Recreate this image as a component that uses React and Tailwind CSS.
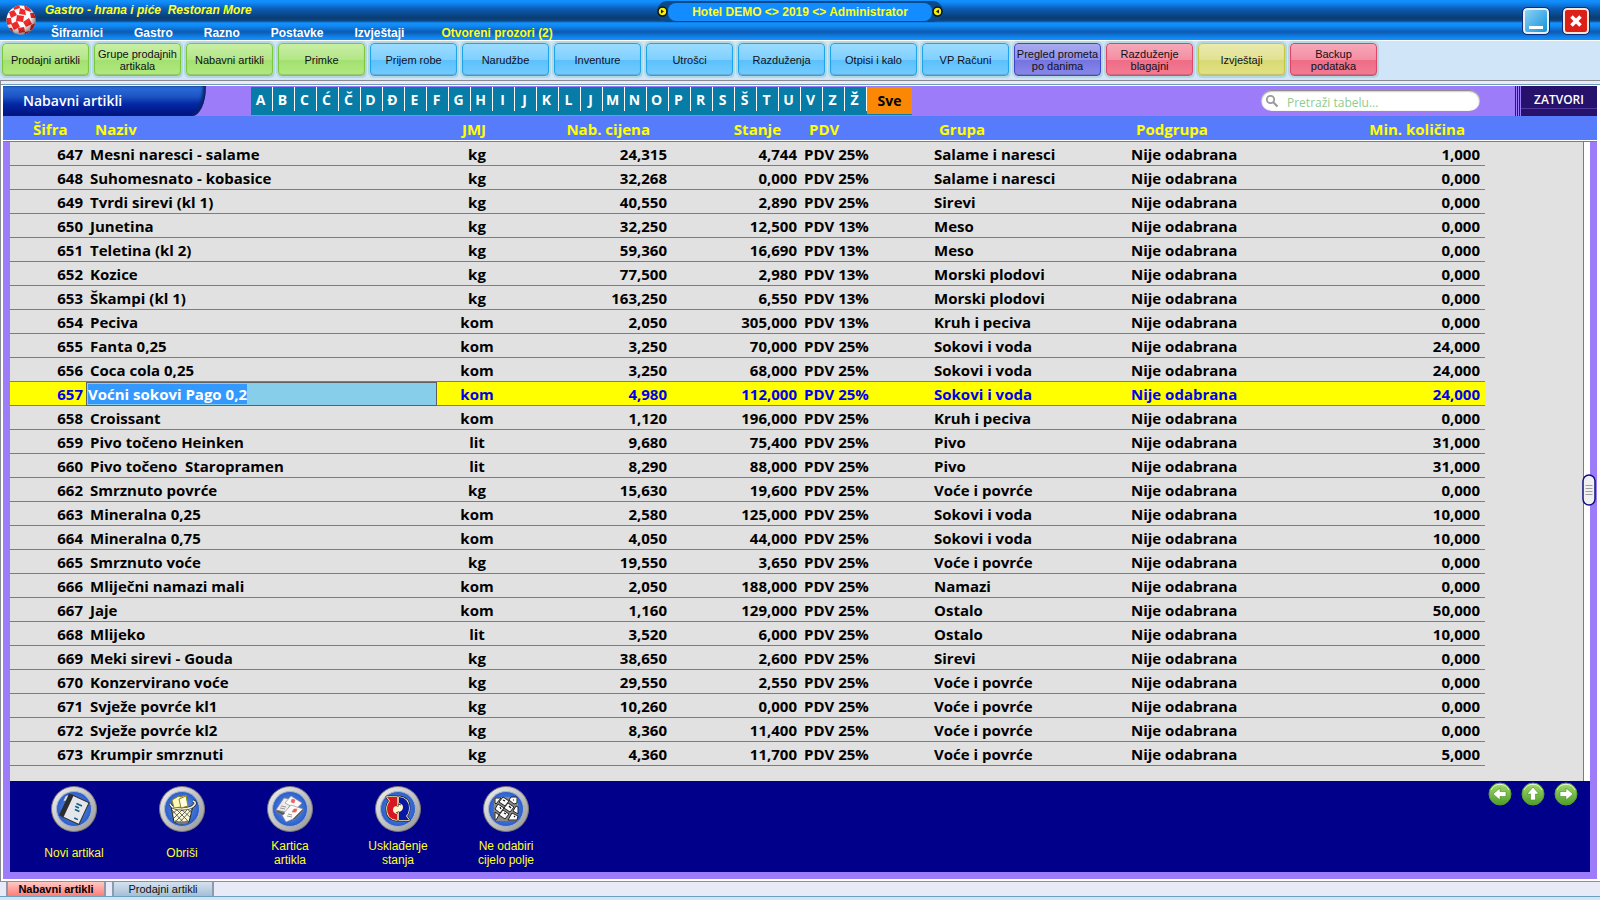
import { useEffect, useRef, useState } from "react";

const menuItems = ["Šifrarnici", "Gastro", "Razno", "Postavke", "Izvještaji"];

const toolColors = {
  green: "border-[#7cc83c] bg-[linear-gradient(#c8efa4,#b4e688_50%,#a2e070_52%,#b2ea80)]",
  blue: "border-[#1ea4ee] bg-[linear-gradient(#9cdcff,#80d0ff_50%,#5cc0fc_52%,#74ccff)]",
  violet: "border-[#4444cc] bg-[linear-gradient(#aaaaf0,#9090e8_50%,#7474e0_52%,#8888ea)]",
  red: "border-[#e04468] bg-[linear-gradient(#f6a8b8,#f48ea2_50%,#ee6c86_52%,#f47c94)]",
  yellow: "border-[#c8c83c] bg-[linear-gradient(#eaeaac,#e2e294_50%,#d8d874_52%,#e2e284)]",
};

const tools = [
  { label: "Prodajni artikli", color: "green" },
  { label: "Grupe prodajnih\nartikala", color: "green" },
  { label: "Nabavni artikli", color: "green" },
  { label: "Primke", color: "green" },
  { label: "Prijem robe", color: "blue" },
  { label: "Narudžbe", color: "blue" },
  { label: "Inventure", color: "blue" },
  { label: "Utrošci", color: "blue" },
  { label: "Razduženja", color: "blue" },
  { label: "Otpisi i kalo", color: "blue" },
  { label: "VP Računi", color: "blue" },
  { label: "Pregled prometa\npo danima", color: "violet" },
  { label: "Razduženje\nblagajni", color: "red" },
  { label: "Izvještaji", color: "yellow" },
  { label: "Backup\npodataka", color: "red" },
];

const letters = "A B C Ć Č D Đ E F G H I J K L J M N O P R S Š T U V Z Ž".split(" ");

const columns = [
  { label: "Šifra", col: "w-[76px]", th: "text-left pl-[23px]" },
  { label: "Naziv", col: "w-[351px]", th: "text-left pl-[9px]" },
  { label: "JMJ", col: "w-[80px]", th: "text-center pr-[6px]" },
  { label: "Nab. cijena", col: "w-[153px]", th: "text-right pr-[20px]" },
  { label: "Stanje", col: "w-[130px]", th: "text-right pr-[19px]" },
  { label: "PDV", col: "w-[130px]", th: "text-left pl-[9px]" },
  { label: "Grupa", col: "w-[197px]", th: "text-left pl-[9px]" },
  { label: "Podgrupa", col: "w-[197px]", th: "text-left pl-[9px]" },
  { label: "Min. količina", col: "w-[161px]", th: "text-right pr-[20px]" },
];

const rows = [
  [647, "Mesni naresci - salame", "kg", "24,315", "4,744", "PDV 25%", "Salame i naresci", "1,000"],
  [648, "Suhomesnato - kobasice", "kg", "32,268", "0,000", "PDV 25%", "Salame i naresci", "0,000"],
  [649, "Tvrdi sirevi (kl 1)", "kg", "40,550", "2,890", "PDV 25%", "Sirevi", "0,000"],
  [650, "Junetina", "kg", "32,250", "12,500", "PDV 13%", "Meso", "0,000"],
  [651, "Teletina (kl 2)", "kg", "59,360", "16,690", "PDV 13%", "Meso", "0,000"],
  [652, "Kozice", "kg", "77,500", "2,980", "PDV 13%", "Morski plodovi", "0,000"],
  [653, "Škampi (kl 1)", "kg", "163,250", "6,550", "PDV 13%", "Morski plodovi", "0,000"],
  [654, "Peciva", "kom", "2,050", "305,000", "PDV 13%", "Kruh i peciva", "0,000"],
  [655, "Fanta 0,25", "kom", "3,250", "70,000", "PDV 25%", "Sokovi i voda", "24,000"],
  [656, "Coca cola 0,25", "kom", "3,250", "68,000", "PDV 25%", "Sokovi i voda", "24,000"],
  [657, "Voćni sokovi Pago 0,2", "kom", "4,980", "112,000", "PDV 25%", "Sokovi i voda", "24,000"],
  [658, "Croissant", "kom", "1,120", "196,000", "PDV 25%", "Kruh i peciva", "0,000"],
  [659, "Pivo točeno Heinken", "lit", "9,680", "75,400", "PDV 25%", "Pivo", "31,000"],
  [660, "Pivo točeno  Staropramen", "lit", "8,290", "88,000", "PDV 25%", "Pivo", "31,000"],
  [662, "Smrznuto povrće", "kg", "15,630", "19,600", "PDV 25%", "Voće i povrće", "0,000"],
  [663, "Mineralna 0,25", "kom", "2,580", "125,000", "PDV 25%", "Sokovi i voda", "10,000"],
  [664, "Mineralna 0,75", "kom", "4,050", "44,000", "PDV 25%", "Sokovi i voda", "10,000"],
  [665, "Smrznuto voće", "kg", "19,550", "3,650", "PDV 25%", "Voće i povrće", "0,000"],
  [666, "Mliječni namazi mali", "kom", "2,050", "188,000", "PDV 25%", "Namazi", "0,000"],
  [667, "Jaje", "kom", "1,160", "129,000", "PDV 25%", "Ostalo", "50,000"],
  [668, "Mlijeko", "lit", "3,520", "6,000", "PDV 25%", "Ostalo", "10,000"],
  [669, "Meki sirevi - Gouda", "kg", "38,650", "2,600", "PDV 25%", "Sirevi", "0,000"],
  [670, "Konzervirano voće", "kg", "29,550", "2,550", "PDV 25%", "Voće i povrće", "0,000"],
  [671, "Svježe povrće kl1", "kg", "10,260", "0,000", "PDV 25%", "Voće i povrće", "0,000"],
  [672, "Svježe povrće kl2", "kg", "8,360", "11,400", "PDV 25%", "Voće i povrće", "0,000"],
  [673, "Krumpir smrznuti", "kg", "4,360", "11,700", "PDV 25%", "Voće i povrće", "5,000"],
];

const BallLogo = () => (
  <svg viewBox="0 0 32 32" className="h-8 w-8">
    <defs>
      <clipPath id="ball"><circle cx="16" cy="16" r="14.500" /></clipPath>
      <radialGradient id="ballShade" cx="42%" cy="38%" r="62%">
        <stop offset="0.6" stopColor="#400" stopOpacity="0" />
        <stop offset="1" stopColor="#300" stopOpacity="0.55" />
      </radialGradient>
    </defs>
    <g clipPath="url(#ball)">
      <rect width="32" height="32" fill="#fdfdfd" />
      <g fill="#ee2a2a">
        <path d="M8 2l6-2 1 4-6 2zM19 1l6 2 1 5-6-2z" />
        <path d="M4 8l5-2 3 5-6 3zM15 4l5 2 1 5-7-1z" />
        <path d="M0 14l6 0 1 6-5 1zM12 11l7 1-1 6-7-1zM25 9l4 0 2 5-5 0z" />
        <path d="M6 20l6-3 3 6-6 3zM18 18l6-4 3 6-6 3z" />
        <path d="M2 24l5 0 2 6-3-1zM13 24l6-1 1 5-6 1zM26 21l5-2-2 7-4 0z" />
        <path d="M20 28l5-1-2 4-4 1z" />
      </g>
      <circle cx="16" cy="16" r="15" fill="url(#ballShade)" />
    </g>
  </svg>
);

const PillDot = ({ flip }) => (
  <svg viewBox="0 0 11 11" className="h-[11px] w-[11px]">
    <circle cx="5.5" cy="5.5" r="4.5" fill="#f4ee10" stroke="#111" strokeWidth="1.5" />
    <path d={flip ? "M7 3.5v4l-3-2z" : "M4 3.5v4l3-2z"} fill="#111" />
  </svg>
);

const NotebookArt = () => (
  <g transform="rotate(25 23 23)">
    <rect x="15" y="11" width="19" height="24" fill="#e4e6ea" stroke="#333" strokeWidth="1" />
    <rect x="12" y="11" width="5" height="24" fill="#2c2c30" />
    <path d="M23 17h6M23 20h4M24 23h5M27 31h4" stroke="#0c5c88" strokeWidth="1.6" />
    <path d="M12 13l-2 2v5l2-1z" fill="#ddd" />
  </g>
);

const BasketArt = () => (
  <g>
    <path d="M12 20l3 16q8 4 15 0l4-16q-11 6-22 0z" fill="#fbf8d4" stroke="#222" strokeWidth="1" />
    <path d="M13 24l12 13M17 23l13 13M22 23l10 9M28 23l5 4M33 23L20 37M29 23L16 36M24 23l-9 9M19 23l-6 5" stroke="#444" strokeWidth="0.8" />
    <path d="M11 18q2 5 12 5t13-5q1-2-2-3" fill="none" stroke="#222" strokeWidth="3" />
    <path d="M11 18q2 5 12 5t13-5q1-2-2-3" fill="none" stroke="#f4f0d0" strokeWidth="1.6" />
    <path d="M13 14l7-4 1 1 6-2 2 11-14 2z" fill="#fdf8b8" stroke="#8a8420" strokeWidth="1" />
    <path d="M20 13l7-3 2 10-7 2z" fill="#fffce0" stroke="#8a8420" strokeWidth="1" />
    <path d="M16 34q7 3 13 0v3q-6 3-12 0z" fill="#777" />
  </g>
);

const CardsArt = () => (
  <g stroke="#8a8a8a" strokeWidth="0.6">
    <path d="M9 24l8-12 9 2-7 12z" fill="#f0eaea" />
    <path d="M18 17l6-7 11 7-6 6z" fill="#fbf8f8" />
    <path d="M15 29l9-10 12 4-10 10-7 3z" fill="#fafafa" />
    <path d="M9 24l9 3-2 2-7-3zM26 33l10-10v2l-9 9z" fill="#555" />
    <path d="M25 13l3 1-1 3-3-1zM27 23l3 0-1 3-4 0z" fill="#f06060" stroke="#f06060" />
    <path d="M13 22l5 1M14 20l5 1M20 30l5 1M21 28l4 1" stroke="#999" strokeWidth="1" />
  </g>
);

const refreshRed = "M12 11h10v9q-4 0-4 4 0 3 4 4v6q-10-1-10-11 0-5 3-8z";
const refreshBlue = "M34 34H24v-8q4-1 4-5 0-3-4-4v-6q10 1 10 11 0 5-3 8z";

const RefreshArt = () => (
  <g strokeLinejoin="round">
    <path d="M18 17h10v13h-10z" fill="#fff6cc" />
    <path d={refreshRed} fill="#222" stroke="#222" strokeWidth="3" />
    <path d={refreshBlue} fill="#222" stroke="#222" strokeWidth="3" />
    <path d={refreshRed} fill="#f8ecc0" stroke="#f8ecc0" strokeWidth="1.6" />
    <path d={refreshBlue} fill="#f8ecc0" stroke="#f8ecc0" strokeWidth="1.6" />
    <path d="M18 20l5 1 5-3v7l-5 0-5 4z" fill="#fff6cc" />
    <path d={refreshRed} fill="#d81820" />
    <path d={refreshBlue} fill="#0818a0" />
  </g>
);

const KeysArt = () => (
  <g>
    <rect x="11" y="11" width="24" height="24" rx="2" fill="#8a8a8a" />
    <g fill="#fafafa" stroke="#222" strokeWidth="1">
      <path d="M12 12h6l-5 6-1-1zM20 11l6 4-4 5-6-4zM28 11h6v6l-3 1-5-4z" />
      <path d="M15 18l6 4-4 5-5-4zM25 17l6 4-4 5-6-4zM33 20l2 1v7l-5-3zM12 26l4 3-3 5-1 0z" />
      <path d="M20 24l6 4-4 5-6-4zM29 27l6 3-1 4h-9z" />
    </g>
    <path d="M20 14l2 1M17 21l1 2M26 20l2 2M21 27l2 1M30 14h1M31 30l1 1" stroke="#111" strokeWidth="1.2" />
  </g>
);

const RoundIcon = ({ children }) => (
  <svg viewBox="0 0 46 46" className="h-[46px] w-[46px]">
    <defs>
      <linearGradient id="rim" x1="0" y1="0" x2="1" y2="1">
        <stop offset="0" stopColor="#f2f2f2" />
        <stop offset="0.5" stopColor="#c4c4c4" />
        <stop offset="1" stopColor="#949494" />
      </linearGradient>
      <radialGradient id="face">
        <stop offset="0" stopColor="#6aa0f4" />
        <stop offset="1" stopColor="#2a5cc8" />
      </radialGradient>
    </defs>
    <circle cx="23" cy="23" r="22.500" fill="url(#rim)" stroke="#777" strokeWidth="1" />
    <circle cx="23" cy="23" r="17.500" fill="url(#face)" stroke="#a8b4cc" strokeWidth="1" />
    {children}
  </svg>
);

const actions = [
  { label: "Novi artikal", art: <NotebookArt /> },
  { label: "Obriši", art: <BasketArt /> },
  { label: "Kartica artikla", art: <CardsArt /> },
  { label: "Usklađenje stanja", art: <RefreshArt /> },
  { label: "Ne odabiri cijelo polje", art: <KeysArt /> },
];

const arrows = [
  { label: "Prethodni", turn: "rotate(180 12 12)" },
  { label: "Na vrh", turn: "rotate(-90 12 12)" },
  { label: "Sljedeći", turn: "rotate(0 12 12)" },
];

const ArrowIcon = ({ turn }) => (
  <svg viewBox="0 0 24 24" className="h-6 w-6">
    <defs>
      <linearGradient id="leaf" x1="0" y1="0" x2="0" y2="1">
        <stop offset="0" stopColor="#a4dc70" />
        <stop offset="1" stopColor="#4c9c28" />
      </linearGradient>
    </defs>
    <circle cx="12" cy="12" r="11" fill="url(#leaf)" stroke="#5a9c34" strokeWidth="1" />
    <path d="M3 8a10 10 0 0 1 18 0" fill="none" stroke="#e4f8d0" strokeWidth="1" />
    <path d="M6 9.500h6V6l7 6-7 6v-3.500H6z" fill="#fff" stroke="#4a8a24" strokeWidth="0.6" transform={turn} />
  </svg>
);

const TitleBar = () => (
  <header className="relative flex h-10 bg-[linear-gradient(#1292ff,#1086f4_3px,#0a5cb4_9px,#0a3c70_18px,#0c4888_21px,#1292ff_23px,#1088f4_26px,#0c5ab0_32px,#1082ec_37px,#1292ff)]">
    <div className="flex w-[45px] shrink-0 items-center pl-[5px]">
      <BallLogo />
    </div>
    <div className="flex flex-1 flex-col text-[12px] font-bold leading-[14px]">
      <div className="h-[22px] whitespace-pre pt-[3px] italic text-[#ffff20]">
        Gastro - hrana i piće  Restoran More
      </div>
      <nav className="flex h-[18px] items-center gap-[31px] pl-[6px] pt-[3px] text-white">
        {menuItems.map((item) => (
          <button key={item} type="button">{item}</button>
        ))}
        <button type="button" className="pl-[6px] text-[#ffff20]">Otvoreni prozori (2)</button>
      </nav>
    </div>
    <div className="absolute left-1/2 top-px flex h-[21px] w-[286px] -translate-x-1/2 items-center justify-between rounded-[10px] bg-[#084a8c]">
      <PillDot />
      <div className="flex h-[18px] w-[266px] items-center justify-center rounded-[8px] bg-[#128cff] text-[12px] font-bold text-[#ffff20]">
        {"Hotel DEMO <> 2019 <> Administrator"}
      </div>
      <PillDot flip />
    </div>
    <div className="flex items-start gap-[14px] pr-[11px] pt-2">
      <button type="button" aria-label="Smanji" className="flex h-[26px] w-[26px] items-end justify-center rounded-[4px] border-2 border-[#e8f0f4] bg-[linear-gradient(135deg,#8cd0f4,#1094dc)] pb-[3px] outline outline-[#0a2a80]">
        <span className="h-[3px] w-[14px] bg-white"></span>
      </button>
      <button type="button" aria-label="Zatvori prozor" className="flex h-[26px] w-[26px] items-center justify-center rounded-[4px] border-2 border-[#f4e8d8] bg-[#dc2018] outline outline-[#0a2a80]">
        <svg viewBox="0 0 14 14" className="h-[14px] w-[14px]">
          <path d="M2.500 2.500l9 9M11.500 2.500l-9 9" stroke="#fff" strokeWidth="3.600" />
        </svg>
      </button>
    </div>
  </header>
);

const Toolbar = () => (
  <div className="flex h-10 gap-[5px] border-t border-white bg-[#d1e5f9] pl-[2px] pt-[2px]">
    {tools.map((tool) => (
      <button
        key={tool.label}
        type="button"
        className={`flex h-[33px] w-[87px] shrink-0 items-center justify-center whitespace-pre rounded-[4px] border text-center text-[11px] leading-3 text-[#101018] shadow-[1px_1px_1px_#5a8494,inset_0_-1px_1px_rgba(0,0,0,0.15)] outline-2 outline-[#b4d8e2] ${toolColors[tool.color]}`}
      >
        {tool.label}
      </button>
    ))}
  </div>
);

const PanelHeader = () => {
  const [query, setQuery] = useState("");

  return (
    <div className="flex h-[30px] bg-[#9c7cf8] font-['Open_Sans','Noto_Sans',sans-serif]">
      <h1 className="h-[30px] w-[203px] shrink-0 rounded-br-[14px_30px] bg-[linear-gradient(#2c70dc,#1c54c4_35%,#0428a4_60%,#001080)] pl-5 text-[14px] font-semibold leading-[30px] text-white shadow-[inset_-3px_0_3px_#0a2468]">
        Nabavni artikli
      </h1>
      <div className="ml-[45px] mt-px flex h-[28px] shrink-0 bg-[#067ca6]">
        {letters.map((letter, i) => (
          <button
            key={i}
            type="button"
            className="h-6 w-[22px] border-r border-white pr-[2px] text-[14px] font-bold leading-[26px] text-white"
          >
            {letter}
          </button>
        ))}
        <button type="button" className="h-[27px] w-[45px] bg-[#fb8804] text-[14px] font-bold leading-[26px] text-black">
          Sve
        </button>
      </div>
      <div className="flex flex-1 justify-end pt-1">
        <label className="flex h-[21px] w-[219px] items-center rounded-full bg-white pl-1 shadow-[inset_0_1px_2px_#666]">
          <svg viewBox="0 0 14 14" className="h-[14px] w-[14px] shrink-0">
            <circle cx="5.500" cy="5.500" r="3.700" fill="none" stroke="#9a9a9a" strokeWidth="1.800" />
            <path d="M8.500 8.500l4 4" stroke="#9a9a9a" strokeWidth="2.200" />
          </svg>
          <input
            type="text"
            aria-label="Pretraži tabelu"
            placeholder="Pretraži tabelu..."
            value={query}
            onChange={(e) => setQuery(e.target.value)}
            className="ml-2 min-w-0 flex-1 bg-transparent pt-[4px] text-[12px] leading-4 outline-none placeholder:text-[#90cc90]"
          />
        </label>
      </div>
      <div className="ml-[35px] w-[6px] bg-[repeating-linear-gradient(90deg,#2c1478_0_1px,#9c7cf8_1px_2px)]"></div>
      <button
        type="button"
        className="w-[76px] bg-[linear-gradient(#26126a_22px,#5038a0_22px,#5038a0_23px,#26126a_23px)] pb-[2px] text-center text-[12px] font-semibold text-white"
      >
        ZATVORI
      </button>
    </div>
  );
};

const ArticleRow = ({ row, active }) => {
  const [id, name, unit, price, stock, tax, group, min] = row;
  const nameRef = useRef(null);
  const [value, setValue] = useState(name);

  useEffect(() => {
    if (active) nameRef.current.select();
  }, [active]);

  const tone = active ? "bg-[#ffff00] text-[#0000f0]" : "text-black";
  const cell = `h-6 border-b border-[#567bee] pt-[2px] leading-[21px] whitespace-pre ${tone}`;

  return (
    <tr>
      <td className={`${cell} pr-[3px] text-right`}>{id}</td>
      {active ? (
        <td className="h-6 border-b border-[#606060] p-0">
          <input
            ref={nameRef}
            type="text"
            aria-label="Naziv artikla"
            value={value}
            onChange={(e) => setValue(e.target.value)}
            className="block h-[23px] w-full border border-b-0 border-[#606060] bg-[#87ceeb] px-px font-bold leading-[22px] text-black outline-none selection:bg-[#3399ff] selection:text-white"
          />
        </td>
      ) : (
        <td className={`${cell} pl-1`}>{name}</td>
      )}
      <td className={`${cell} text-center`}>{unit}</td>
      <td className={`${cell} pr-[3px] text-right`}>{price}</td>
      <td className={`${cell} pr-[3px] text-right`}>{stock}</td>
      <td className={`${cell} pl-1`}>{tax}</td>
      <td className={`${cell} pl-1`}>{group}</td>
      <td className={`${cell} pl-1`}>Nije odabrana</td>
      <td className={`${cell} pr-[5px] text-right`}>{min}</td>
      <td></td>
    </tr>
  );
};

const ArticleTable = () => (
  <div className="flex bg-[linear-gradient(#567bfb_24px,#ffffff_24px,#ffffff_25px,#567bee_25px,#567bee_26px,#9c7cf8_26px)] px-[7px]">
    <div className="min-w-0 flex-1">
      <table className="w-full table-fixed border-separate border-spacing-0 font-['Open_Sans','Noto_Sans',sans-serif] text-[15px] font-bold">
        <colgroup>
          {columns.map((c) => (
            <col key={c.label} className={c.col} />
          ))}
          <col className="w-[98px]" />
        </colgroup>
        <thead>
          <tr className="h-[26px] text-[#ffff00]">
            {columns.map((c) => (
              <th key={c.label} scope="col" className={`p-0 leading-6 ${c.th}`}>{c.label}</th>
            ))}
            <td></td>
          </tr>
        </thead>
        <tbody className="bg-[#e1e1e1]">
          {rows.map((row) => (
            <ArticleRow key={row[0]} row={row} active={row[0] === 657} />
          ))}
        </tbody>
      </table>
      <div className="h-[15px] bg-[#e1e1e1]"></div>
    </div>
    <div className="relative mt-[26px] w-[7px] border-l border-[#567bee] bg-white">
      <svg viewBox="0 0 14 32" className="absolute -left-[2px] top-[332px] h-8 w-[14px]">
        <rect x="1" y="1" width="12" height="30" rx="6" fill="#f0f0f0" stroke="#101080" strokeWidth="1.500" />
        <path d="M3.500 11.500h7M3.500 14.500h7M3.500 17.500h7M3.500 20.500h7" stroke="#a0a0a0" strokeWidth="1" />
      </svg>
    </div>
  </div>
);

const ActionBar = () => (
  <div className="bg-[#9c7cf8] px-[7px] pb-[7px]">
    <div className="flex h-[91px] justify-between bg-[#00008b] pl-[10px] pr-3 pt-[5px]">
      <div className="flex">
        {actions.map((action) => (
          <button
            key={action.label}
            type="button"
            className="flex w-[108px] flex-col items-center text-[12px] leading-[14px] text-[#ffff20]"
          >
            <RoundIcon>{action.art}</RoundIcon>
            <span className="flex h-[38px] w-[70px] items-center justify-center pt-1">{action.label}</span>
          </button>
        ))}
      </div>
      <div className="-mt-1 flex gap-[9px]">
        {arrows.map((arrow) => (
          <button key={arrow.label} type="button" aria-label={arrow.label} className="h-6 w-6">
            <ArrowIcon turn={arrow.turn} />
          </button>
        ))}
      </div>
    </div>
  </div>
);

const WindowTabs = () => (
  <div className="flex h-4 gap-[6px] border-b border-t border-b-[#6ca0bc] border-t-[#909090] bg-[#e8eaf8] pl-[6px] text-[11px] leading-[14px]">
    <button type="button" className="w-[100px] border-x-2 border-[#9098a8] bg-[linear-gradient(#ffc8c4,#ff7c78)] font-bold text-black">
      Nabavni artikli
    </button>
    <button type="button" className="w-[102px] border-x-2 border-[#8c9cb0] bg-[linear-gradient(#d4e2ee,#a4bed8)] text-[#101010]">
      Prodajni artikli
    </button>
  </div>
);

export default function App() {
  return (
    <div className="min-h-screen overflow-hidden bg-[#d1e5f9] font-['Liberation_Sans',Arial,sans-serif]">
      <TitleBar />
      <Toolbar />
      <main className="border-l border-t border-[#888890] bg-[#e8eaf8]">
        <div className="mt-[3px] border-t border-[#6c9cb8]">
          <div className="border-b-2 border-l-2 border-r-[3px] border-t border-white">
            <PanelHeader />
            <ArticleTable />
            <ActionBar />
          </div>
        </div>
      </main>
      <WindowTabs />
    </div>
  );
}
